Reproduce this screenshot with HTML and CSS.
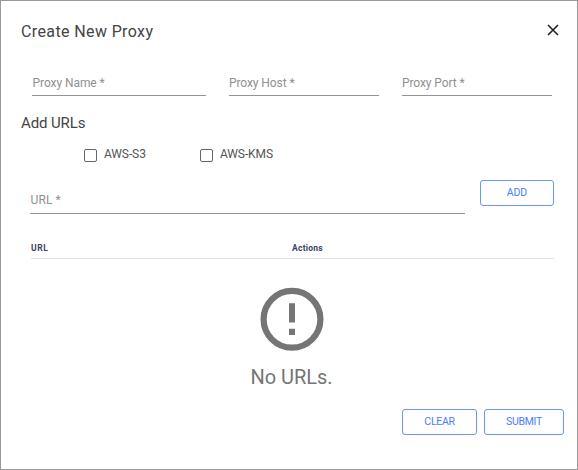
FILE: index.html
```html
<!DOCTYPE html>
<html lang="en">
<head>
<meta charset="utf-8">
<title>Create New Proxy</title>
<link rel="stylesheet" href="styles.css">
</head>
<body>
<main class="dialog">
  <header class="dialog-header">
    <h1 class="title"><span>Create New Proxy</span></h1>
    <svg class="close" viewBox="0 0 12 12" role="img" aria-label="Close"><path d="M1 1l10 10M11 1L1 11"/></svg>
  </header>
  <section class="proxy-fields">
    <div class="field name"><span>Proxy Name *</span></div>
    <div class="field host"><span>Proxy Host *</span></div>
    <div class="field port"><span>Proxy Port *</span></div>
  </section>
  <h2 class="subtitle"><span>Add URLs</span></h2>
  <div class="checks">
    <label class="check s3"><i class="box"></i><span>AWS-S3</span></label>
    <label class="check kms"><i class="box"></i><span>AWS-KMS</span></label>
  </div>
  <section class="url-row">
    <div class="field url"><span>URL *</span></div>
    <button class="btn add"><span>ADD</span></button>
  </section>
  <div class="table-head">
    <div class="col-url"><span>URL</span></div>
    <div class="col-actions"><span>Actions</span></div>
  </div>
  <section class="empty">
    <svg class="alert" viewBox="0 0 64 64" aria-hidden="true">
      <circle cx="32" cy="32.3" r="28.4"/>
      <path d="M29 16.3h6v19.2h-6zM29 41.8h6v6.2h-6z"/>
    </svg>
    <p class="empty-text"><span>No URLs.</span></p>
  </section>
  <footer class="actions">
    <button class="btn clear"><span>CLEAR</span></button>
    <button class="btn submit"><span>SUBMIT</span></button>
  </footer>
</main>
</body>
</html>
```
FILE: styles.css
```css
* { box-sizing: border-box; }
body { margin: 0; font-family: Roboto, "Liberation Sans", sans-serif; color: #444; background: #fff; }
h1, h2, p { margin: 0; font-weight: 400; }
.dialog { width: 578px; height: 470px; border: 1px solid #999; display: flex; flex-direction: column; background: #fff; }
.dialog-header { height: 60px; flex: none; padding: 0 18px 0 20px; display: flex; justify-content: space-between; align-items: center; }
.title { font-size: 16px; line-height: 20px; letter-spacing: 0.38px; padding-top: 2px; }
.close { width: 12px; height: 12px; margin-bottom: 3px; stroke: #222; stroke-width: 1.6; fill: none; }
.proxy-fields { display: flex; padding-left: 31px; height: 35px; flex: none; align-items: flex-end; }
.field { height: 24px; border-bottom: 1px solid #949494; font-size: 12px; line-height: 23px; color: #909090; letter-spacing: -0.08px; }
.name { width: 174px; margin-right: 23px; padding-left: 0.6px; }
.host { width: 150px; margin-right: 23px; }
.port { width: 150px; }
.subtitle { margin-top: 17px; padding-left: 20px; font-size: 15px; line-height: 20px; letter-spacing: -0.12px; flex: none; }
.checks { display: flex; padding-left: 83px; margin-top: 12px; height: 20px; flex: none; }
.check { display: flex; align-items: center; font-size: 12px; line-height: 16px; color: #555; letter-spacing: -0.1px; }
.check span { margin: 0 0 3px 7px; }
.s3 { width: 116px; }
.box { width: 13px; height: 13px; border: 1px solid #666; border-radius: 2px; }
.url-row { display: flex; height: 49px; padding: 0 23px 0 29px; justify-content: space-between; align-items: flex-end; flex: none; }
.url { width: 435px; height: 26px; line-height: 25px; letter-spacing: 0.1px; padding-left: 0.5px; }
.btn { font-family: inherit; font-size: 10.5px; line-height: 14px; padding: 0 0 1px; color: #4b7df8; background: #fff; border: 1px solid #6698fa; border-radius: 3px; height: 26px; letter-spacing: -0.3px; }
.add { width: 74px; margin-bottom: 8px; letter-spacing: -0.1px; }
.table-head { margin: 27px 23px 0 30px; height: 18px; border-bottom: 1px solid #e1e2e8; display: flex; font-size: 8.5px; line-height: 14px; font-weight: 700; color: #3b4365; letter-spacing: 0.25px; flex: none; }
.col-url { width: 261px; letter-spacing: 0.6px; }
.empty { margin-top: 28px; padding-left: 5px; display: flex; flex-direction: column; align-items: center; flex: none; }
.alert { width: 64px; height: 64px; }
.alert circle { fill: none; stroke: #757575; stroke-width: 6.2; }
.alert path { fill: #757575; }
.empty-text { margin-top: 14px; font-size: 20px; line-height: 24px; color: #757575; letter-spacing: -0.05px; }
.actions { margin-top: 20px; display: flex; justify-content: flex-end; gap: 7px; padding-right: 13px; flex: none; }
.clear { width: 75px; }
.submit { width: 80px; }
```
